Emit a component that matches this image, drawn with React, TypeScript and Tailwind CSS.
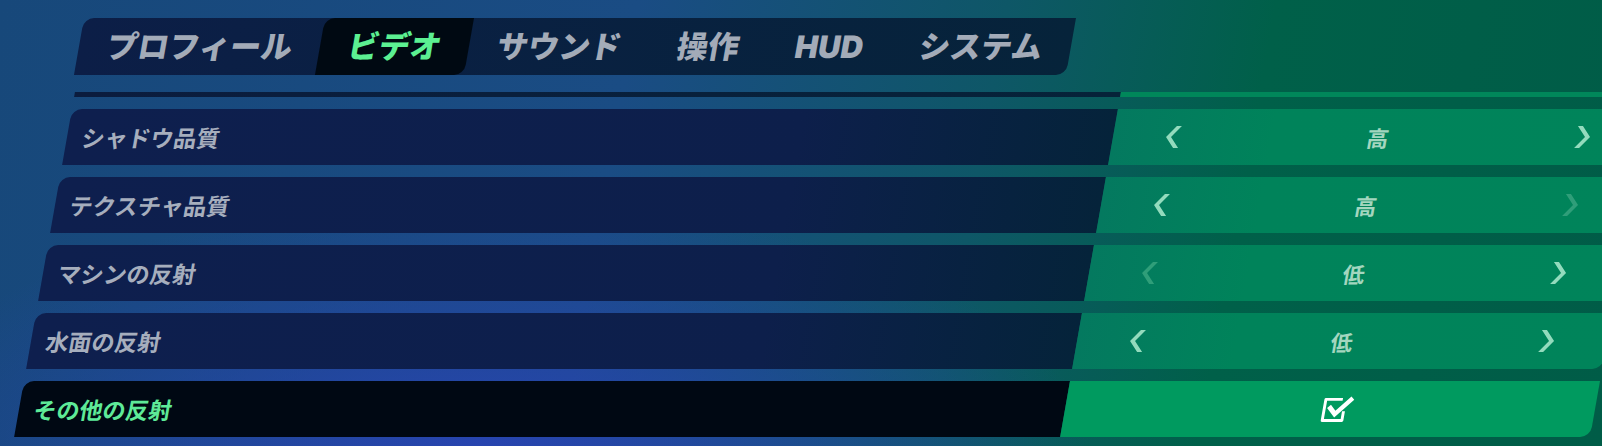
const tabs = ["プロフィール", "ビデオ", "サウンド", "操作", "HUD", "システム"];
const activeTab = 1;

type Row = {
  label: string;
  value?: string;
  canPrev?: boolean;
  canNext?: boolean;
  toggle?: boolean;
  active?: boolean;
};

const rows: Row[] = [
  { label: "シャドウ品質", value: "高", canPrev: true, canNext: true },
  { label: "テクスチャ品質", value: "高", canPrev: true, canNext: false },
  { label: "マシンの反射", value: "低", canPrev: false, canNext: true },
  { label: "水面の反射", value: "低", canPrev: true, canNext: true },
  { label: "その他の反射", toggle: true, active: true },
];

function CheckBox() {
  return (
    <svg width="33" height="30" viewBox="0 0 36 32" fill="none" className="ml-[12px]">
      <path
        d="M23 5.5H4.5v23H26v-10"
        stroke="#ffffff"
        strokeWidth="3.2"
        strokeLinejoin="round"
      />
      <path
        d="M11 15l6 6.5L32 6"
        stroke="#ffffff"
        strokeWidth="5"
        strokeLinecap="square"
      />
    </svg>
  );
}

function Arrow({ dir, on }: { dir: "left" | "right"; on: boolean }) {
  const points =
    dir === "left"
      ? "10,0 15,0 6,11 15,22 10,22 1,11"
      : "1,0 6,0 15,11 6,22 1,22 10,11";
  return (
    <svg
      width="16"
      height="22"
      viewBox="0 0 16 22"
      className={on ? "fill-[#93dbbd]" : "fill-[#2f9e79]"}
    >
      <polygon points={points} />
    </svg>
  );
}

export default function App() {
  return (
    <div className="w-[1602px] h-[446px] overflow-hidden pt-[18px] font-['Noto_Sans_CJK_JP','Noto_Sans',sans-serif] bg-[radial-gradient(ellipse_38%_55%_at_30%_100%,rgba(40,68,178,0.95),rgba(40,68,178,0)),linear-gradient(100deg,#17487a_0%,#1a4c84_38%,#0e5767_60%,#006049_76%,#005c47_100%)]">
      <div className="origin-top-left -skew-x-10 w-[1700px] flex flex-col">
        {/* tab strip */}
        <div className="ml-[84px] self-start flex h-[57px] rounded-tl-[10px] rounded-br-[10px] bg-gradient-to-r from-[#0c1e47] to-[#06233a]">
          {tabs.map((t, i) => (
            <div
              key={t}
              className={
                i === activeTab
                  ? "px-7 flex items-center text-[31px] font-black leading-none font-['Inter','Noto_Sans_CJK_JP',sans-serif] text-[#5cf092] bg-[#000912] rounded-tl-[10px] rounded-br-[10px]"
                  : "px-7 flex items-center text-[31px] font-black leading-none font-['Inter','Noto_Sans_CJK_JP',sans-serif] text-[#a3abb8]"
              }
            >
              {t}
            </div>
          ))}
        </div>

        {/* header strip */}
        <div className="ml-[88px] mt-[17px] flex h-[5px]">
          <div className="w-[1046px] bg-gradient-to-r from-[#0b1c3e] to-[#062339]" />
          <div className="flex-1 bg-[#00875a]" />
        </div>

        {/* setting rows */}
        <div className="ml-[88px] mt-3 flex flex-col gap-3">
          {rows.map((r) => (
            <div key={r.label} className="flex h-[56px]">
              <div
                className={
                  r.active
                    ? "w-[1046px] rounded-tl-[10px] flex items-center px-[15px] text-[23px] font-bold text-[#5eea98] bg-[#000813]"
                    : "w-[1046px] rounded-tl-[10px] flex items-center px-[15px] text-[23px] font-bold text-[#a6aebd] bg-gradient-to-r from-[#0e1f4e] via-[#0d1f4b] via-70% to-[#05233a]"
                }
              >
                {r.label}
              </div>
              <div
                className={
                  r.active
                    ? "w-[530px] rounded-br-[10px] flex items-center justify-center bg-[#009a5f]"
                    : "w-[530px] rounded-br-[10px] flex items-center justify-between px-[52px] bg-gradient-to-r from-[#04795f] via-[#00835a] via-30% to-[#00845a]"
                }
              >
                {r.toggle ? (
                  <CheckBox />
                ) : (
                  <>
                    <Arrow dir="left" on={!!r.canPrev} />
                    <span className="text-[22px] font-bold text-[#a3d6bf]">
                      {r.value}
                    </span>
                    <Arrow dir="right" on={!!r.canNext} />
                  </>
                )}
              </div>
            </div>
          ))}
        </div>
      </div>
    </div>
  );
}
